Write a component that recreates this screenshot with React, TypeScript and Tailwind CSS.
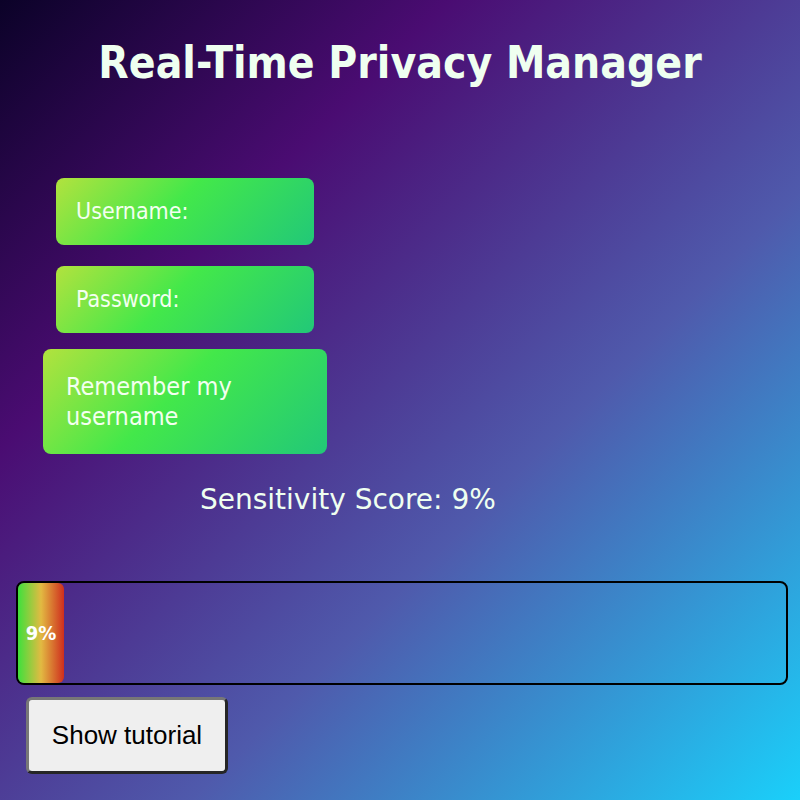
export default function App() {
  return (
    <div className="min-h-[800px] w-[800px] overflow-hidden bg-[linear-gradient(135deg,#0b0228_0%,#4a0c72_28%,#4f5aac_62%,#1ad0fa_100%)] font-['DejaVu_Sans_Condensed','DejaVu_Sans',sans-serif]">
      {/* Title */}
      <h1 className="pt-[35px] text-center text-[44px] font-bold leading-[56px] text-[#effff0]">
        Real-Time Privacy Manager
      </h1>

      {/* Form fields */}
      <div className="mt-[87px] flex flex-col items-start">
        <div className="ml-[56px] flex h-[67px] w-[258px] items-center rounded-lg bg-[linear-gradient(135deg,#b2e23e_0%,#43e84a_45%,#22c878_100%)] px-5 text-[23px] text-[#f3fff0]">
          Username:
        </div>
        <div className="ml-[56px] mt-[21px] flex h-[67px] w-[258px] items-center rounded-lg bg-[linear-gradient(135deg,#b2e23e_0%,#43e84a_45%,#22c878_100%)] px-5 text-[23px] text-[#f3fff0]">
          Password:
        </div>
        <div className="ml-[43px] mt-[16px] flex h-[105px] w-[284px] items-center rounded-lg bg-[linear-gradient(135deg,#b2e23e_0%,#43e84a_45%,#22c878_100%)] pl-[23px] pr-8 text-[25px] leading-[30px] text-[#f3fff0]">
          Remember my username
        </div>
      </div>

      {/* Score */}
      <p className="mt-[28px] pl-[200px] font-['DejaVu_Sans',sans-serif] text-[28px] leading-[36px] text-[#effff0]">
        Sensitivity Score: 9%
      </p>

      {/* Progress bar */}
      <div className="mx-4 mt-[63px] h-[104px] w-[772px] rounded-lg border-2 border-black">
        <div className="flex h-full w-[46px] items-center justify-center rounded-md bg-[linear-gradient(90deg,#3fe03c_0%,#e2ba42_50%,#cf2e1e_100%)] text-[20px] font-bold text-white">
          9%
        </div>
      </div>

      {/* Tutorial button */}
      <button className="ml-[26px] mt-[12px] h-[77px] w-[202px] rounded-md border-[3px] border-b-[#262626] border-l-[#777] border-r-[#262626] border-t-[#777] bg-[#efefef] font-['Liberation_Sans',sans-serif] text-[26px] text-black">
        Show tutorial
      </button>
    </div>
  );
}
